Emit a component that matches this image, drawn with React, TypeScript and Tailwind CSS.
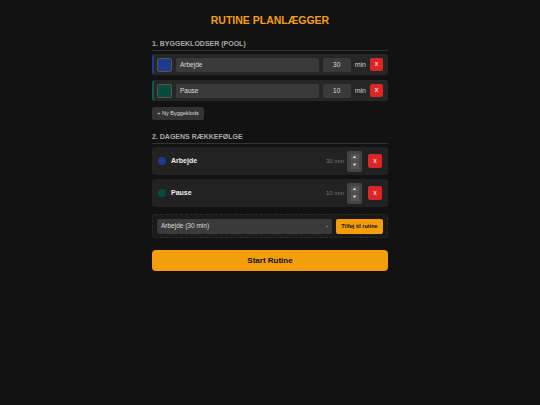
import React, { useState } from "react";

interface Block {
  id: number;
  name: string;
  minutes: number;
  color: string;
  border: string;
}

const blocks: Block[] = [
  { id: 1, name: "Arbejde", minutes: 30, color: "bg-[#1e3a8a]", border: "border-l-[#1e3a8a]" },
  { id: 2, name: "Pause", minutes: 10, color: "bg-[#064e3b]", border: "border-l-[#065f46]" },
];

function CloseButton({ className }: { className: string }) {
  return (
    <button className={`flex items-center justify-center rounded-[2px] bg-[#dc2626] text-[7px] text-white ${className}`}>
      x
    </button>
  );
}

export default function App() {
  const [selected, setSelected] = useState("1");

  return (
    <div className="min-h-[405px] w-full bg-[#121212] font-['Liberation_Sans',Arial,sans-serif] text-white">
      <div className="mx-auto flex w-[236px] flex-col pt-[14px]">
        <h1 className="text-center text-[10.5px] font-bold leading-[12px] text-[#f59e0b]">RUTINE PLANLÆGGER</h1>

        {/* byggeklodser */}
        <h2 className="mt-[13px] border-b border-[#333] pb-[2px] text-[7px] font-bold leading-[9px] text-[#aaa]">
          1. BYGGEKLODSER (POOL)
        </h2>
        <div className="mt-[3px] flex flex-col gap-[5px]">
          {blocks.map((b) => (
            <div
              key={b.id}
              className={`flex h-[21px] items-center rounded-[3px] border-l-2 ${b.border} bg-[#262626] pl-[3px] pr-[5px]`}
            >
              <div className={`h-[14px] w-[15px] rounded-[2px] border border-[#555] ${b.color}`} />
              <div className="ml-[4px] flex h-[14px] flex-1 items-center rounded-[2px] bg-[#3a3a3a] px-[4px] text-[6.5px] text-[#ddd]">
                {b.name}
              </div>
              <div className="ml-[4px] flex h-[14px] w-[28px] items-center justify-center rounded-[2px] bg-[#3a3a3a] text-[6.5px] text-[#ddd]">
                {b.minutes}
              </div>
              <span className="ml-[4px] text-[7px] leading-[14px] text-[#ccc]">min</span>
              <CloseButton className="ml-[4px] h-[13px] w-[13px]" />
            </div>
          ))}
        </div>
        <button className="mt-[6px] h-[13px] w-[52px] rounded-[2px] bg-[#333] text-[5.5px] text-[#ddd]">
          + Ny Byggeklods
        </button>

        {/* rækkefølge */}
        <h2 className="mt-[12px] border-b border-[#333] pb-[2px] text-[7px] font-bold leading-[9px] text-[#aaa]">
          2. DAGENS RÆKKEFØLGE
        </h2>
        <div className="mt-[3px] flex flex-col gap-[4px]">
          {blocks.map((b) => (
            <div key={b.id} className="flex h-[28px] items-center rounded-[3px] bg-[#222] pl-[6px] pr-[6px]">
              <span className={`h-[8px] w-[8px] rounded-full ${b.color}`} />
              <span className="ml-[5px] flex-1 text-[7px] font-bold text-[#eee]">{b.name}</span>
              <span className="text-[6px] text-[#777]">{b.minutes} min</span>
              <div className="ml-[3px] flex h-[21px] w-[15px] flex-col items-center justify-center gap-[1px] rounded-[2px] bg-[#444]">
                <span className="flex h-[7px] w-[8px] items-center justify-center bg-[#555] text-[4px] text-white">▲</span>
                <span className="flex h-[7px] w-[8px] items-center justify-center bg-[#555] text-[4px] text-white">▼</span>
              </div>
              <CloseButton className="ml-[6px] h-[14px] w-[14px]" />
            </div>
          ))}
        </div>

        <div className="mt-[7px] flex h-[24px] items-center gap-[4px] rounded-[3px] border border-dashed border-[#2a2a2a] bg-[#1a1a1a] px-[4px]">
          <div className="relative flex h-[15px] flex-1 items-center rounded-[2px] bg-[#3a3a3a]">
            <select
              value={selected}
              onChange={(e) => setSelected(e.target.value)}
              className="h-full w-full appearance-none bg-transparent px-[4px] text-[6.5px] text-[#ddd] outline-none"
            >
              <option value="1">Arbejde (30 min)</option>
              <option value="2">Pause (10 min)</option>
            </select>
            <span className="pointer-events-none absolute right-[3px] text-[5px] text-[#ccc]">⌄</span>
          </div>
          <button className="h-[15px] w-[47px] rounded-[2px] bg-[#f59e0b] text-[5.5px] font-bold text-[#111]">
            Tilføj til rutine
          </button>
        </div>

        <button className="mt-[12px] h-[21px] w-full rounded-[4px] bg-[#f59e0b] text-[8px] font-bold text-[#111]">
          Start Rutine
        </button>
      </div>
    </div>
  );
}
